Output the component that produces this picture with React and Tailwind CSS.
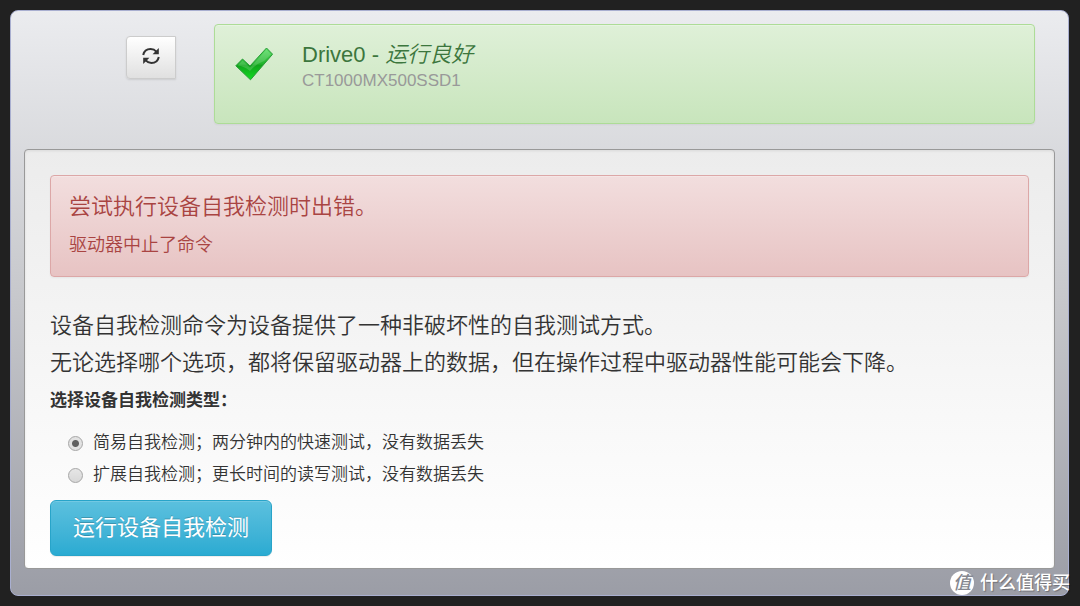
import React, { useState } from 'react';
import clsx from 'clsx';

const testTypes = [
  { id: 'short', label: '简易自我检测；两分钟内的快速测试，没有数据丢失' },
  { id: 'extended', label: '扩展自我检测；更长时间的读写测试，没有数据丢失' }
];

const CheckIcon = ({ className }) => (
  <svg viewBox="0 0 38 34" className={className} aria-hidden="true">
    <defs>
      <linearGradient id="check-fill" x1="0" y1="0" x2="0" y2="1">
        <stop offset="0" stopColor="#58dd63" />
        <stop offset="0.5" stopColor="#22b32d" />
        <stop offset="0.55" stopColor="#10a51b" />
        <stop offset="1" stopColor="#12dc22" />
      </linearGradient>
    </defs>
    <path
      d="M0.8 18.8 L7.5 12 L15 19 L31.5 1 L37.6 7.2 L15.5 32.8 Z"
      fill="url(#check-fill)"
      stroke="#2a9c38"
      strokeWidth="1"
      strokeLinejoin="round"
    />
    <path d="M2.6 18.5 L7.5 13.5 L15 20.6 L31.5 2.6 L36 7.2 L29 14 Q21 17 15 24 Q9 19 2.6 18.5 Z" fill="#ffffff" opacity="0.16" />
  </svg>
);

const RefreshIcon = ({ className }) => (
  <svg viewBox="0 0 18 18" className={className} fill="none" stroke="#333333" strokeWidth="2" aria-hidden="true">
    <path d="M1.2 8 C2 4.2 4.8 2 8.6 2 C11.2 2 13 3 14.6 4.8" />
    <path d="M16.8 10 C16 13.8 13.2 16 9.4 16 C6.8 16 5 15 3.4 13.2" />
    <path d="M16.8 1 V7.2 H10.6 Z" fill="#333333" stroke="none" />
    <path d="M1.2 17 V10.8 H7.4 Z" fill="#333333" stroke="none" />
  </svg>
);

const DriveStatus = ({ name, status, model }) => (
  <div className="flex min-h-[100px] flex-1 items-start rounded border border-[#addc97] bg-linear-to-b from-[#dff0d8] to-[#c8e5bc] pt-4 pl-5 shadow-[inset_0_1px_0_rgba(255,255,255,0.25),0_1px_2px_rgba(0,0,0,0.05)]">
    <CheckIcon className="mt-1.5 h-[34px] w-[38px]" />
    <div className="ml-[29px]">
      <h1 className="text-[22px] leading-7 text-[#3c763d]">
        {name} - <em className="font-[350]">{status}</em>
      </h1>
      <p className="text-[17px] leading-6 text-[#999999]">{model}</p>
    </div>
  </div>
);

const ErrorAlert = ({ title, message }) => (
  <div
    role="alert"
    className="rounded border border-[#dca7a7] bg-linear-to-b from-[#f2dede] to-[#e7c3c3] px-[18px] pt-[13px] pb-[11px] text-[#a94442] shadow-[inset_0_1px_0_rgba(255,255,255,0.25),0_1px_2px_rgba(0,0,0,0.05)]"
  >
    <h2 className="text-[22px] leading-9 font-[350]">{title}</h2>
    <p className="pt-1 pb-1 text-[18px] leading-8 font-[350]">{message}</p>
  </div>
);

const Watermark = () => (
  <div className="absolute right-2.5 bottom-[11px] flex items-center gap-1.5 text-white">
    <span className="flex size-6 items-center justify-center rounded-full bg-white text-[18px] leading-6 font-medium text-[#85878f] italic">值</span>
    <span className="text-[18px] leading-6 font-medium text-shadow-[1px_1px_1px_rgba(0,0,0,0.3)]">什么值得买</span>
  </div>
);

const App = () => {
  const [selected, setSelected] = useState('short');

  return (
    <div
      lang="zh-CN"
      className="relative min-h-screen bg-[#212121] py-2.5 pr-[11px] pl-2.5 font-['Liberation_Sans','Noto_Sans_CJK_SC',sans-serif] text-[#333333]"
    >
      <main className="rounded-lg border border-[#a9afd0] bg-linear-to-b from-[#ebecef] via-[#c6c7cb] to-[#9b9da6] px-[13px] pt-[13px] pb-[26px]">
        <header className="mb-[25px] flex items-start pr-5">
          <div className="mt-3 mr-[38px] flex w-[152px] justify-end">
            <button
              type="button"
              aria-label="刷新"
              className="flex h-[43px] w-[50px] items-center justify-center rounded-l border border-[#cccccc] bg-linear-to-b from-white to-[#e0e0e0] pb-1 shadow-[0_1px_2px_rgba(0,0,0,0.1)]"
            >
              <RefreshIcon className="size-[18px]" />
            </button>
          </div>
          <DriveStatus name="Drive0" status="运行良好" model="CT1000MX500SSD1" />
        </header>

        <section className="rounded border border-[#999999] bg-linear-to-b from-[#ececec] to-white px-[25px] pt-[25px] pb-3 shadow-[inset_0_1px_3px_rgba(0,0,0,0.08)]">
          <ErrorAlert title="尝试执行设备自我检测时出错。" message="驱动器中止了命令" />

          <p className="mt-[30px] text-[22px] leading-[37px] font-[350]">
            设备自我检测命令为设备提供了一种非破坏性的自我测试方式。
            <br />
            无论选择哪个选项，都将保留驱动器上的数据，但在操作过程中驱动器性能可能会下降。
          </p>

          <form onSubmit={(e) => e.preventDefault()}>
            <fieldset>
              <legend className="text-[17px] leading-10 font-bold">选择设备自我检测类型：</legend>
              <div className="mt-1.5 pl-[18px]">
                {testTypes.map((type) => (
                  <label key={type.id} className="flex h-8 items-center gap-2.5 text-[17px] font-[350]">
                    <input
                      type="radio"
                      name="test-type"
                      value={type.id}
                      checked={selected === type.id}
                      onChange={() => setSelected(type.id)}
                      className={clsx(
                        'size-[15px] shrink-0 appearance-none rounded-full border border-[#a6a6a6]',
                        selected === type.id
                          ? 'bg-[radial-gradient(circle,#606060_3px,#e2e2e2_4px)]'
                          : 'bg-linear-to-b from-[#e6e6e6] to-[#d8d8d8]'
                      )}
                    />
                    <span>{type.label}</span>
                  </label>
                ))}
              </div>
            </fieldset>
            <button
              type="submit"
              className="mt-[9px] h-14 rounded-md border border-[#28a4c9] bg-linear-to-b from-[#5bc0de] to-[#2aabd2] px-[22px] text-[22px] leading-8 text-white shadow-[inset_0_1px_0_rgba(255,255,255,0.15),0_1px_1px_rgba(0,0,0,0.075)] text-shadow-[0_-1px_0_rgba(0,0,0,0.2)]"
            >
              运行设备自我检测
            </button>
          </form>
        </section>
      </main>
      <Watermark />
    </div>
  );
};

export default App;
